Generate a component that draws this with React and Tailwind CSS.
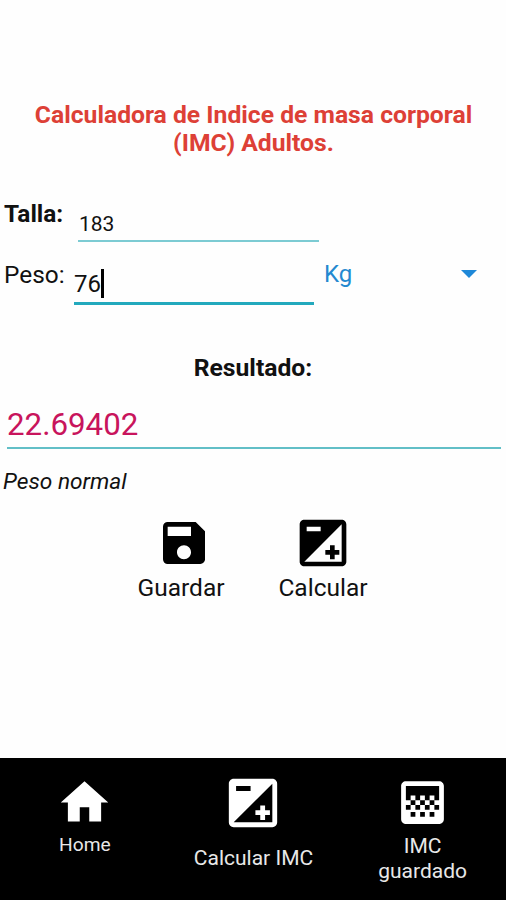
import React, { useState } from 'react';
import { MdHome, MdSave, MdGradient } from 'react-icons/md';

function ExposureIcon({ size, color }) {
  return (
    <svg width={size} height={size} viewBox="0 0 24 24" fill={color}>
      <path d="M15 17v2h2v-2h2v-2h-2v-2h-2v2h-2v2h2zm5-15H4c-1.1 0-2 .9-2 2v16c0 1.1.9 2 2 2h16c1.1 0 2-.9 2-2V4c0-1.1-.9-2-2-2zM5 5h6v2H5V5zm15 15H4L20 4v16z" />
    </svg>
  );
}

function ActionButton({ icon, label, className, iconClass, onClick }) {
  return (
    <button type="button" className={className} onClick={onClick}>
      <span className={iconClass}>{icon}</span>
      <span className="text-[24.5px] leading-[34px]">{label}</span>
    </button>
  );
}

function NavItem({ icon, label, className, labelClass }) {
  return (
    <a href="#" className={className}>
      {icon}
      <span className={labelClass}>{label}</span>
    </a>
  );
}

function App() {
  const [talla] = useState('183');
  const [peso] = useState('76');
  const [resultado, setResultado] = useState('22.69402');

  const calcular = () => {
    const metros = Number(talla) / 100;
    setResultado((Number(peso) / (metros * metros)).toFixed(5));
  };

  return (
    <div className="flex h-[900px] w-[506px] flex-col overflow-hidden bg-[#fefefe] font-['Roboto',sans-serif] text-[#111111]">
      <main className="flex h-[758px] flex-col pt-[101px]">
        <h1 className="pl-px text-center text-[24.7px] leading-[28px] font-bold text-[#dd4036]">
          Calculadora de Indice de masa corporal<br />(IMC) Adultos.
        </h1>

        <div className="mt-[41px] flex h-[45px] items-start pl-[4px]">
          <label className="w-[74px] pt-[2px] text-[24.4px] leading-[28px] font-bold">Talla:</label>
          <div className="flex h-[44px] w-[241px] items-end border-b-2 border-[#7ccbd3] pb-[4px] pl-px text-[21px] leading-[24px]">
            {talla}
          </div>
        </div>

        <div className="flex h-[62px] items-start pl-[4px]">
          <label className="w-[70px] pt-[18px] text-[24.4px] leading-[28px]">Peso:</label>
          <div className="flex h-[62px] w-[240px] items-end border-b-[3px] border-[#23a9bd] pb-[4px] text-[24px] leading-[28px]">
            {peso}
            <span className="h-[29px] w-[3px] bg-black"></span>
          </div>
          <div className="ml-[10px] flex w-[153px] items-center justify-between pt-[17px] text-[24px] leading-[28px] text-[#2489d0]">
            Kg
            <svg className="h-[8px] w-[16px]" viewBox="0 0 16 8" fill="#1e88d8">
              <path d="M0 0h16L8 8z" />
            </svg>
          </div>
        </div>

        <h2 className="mt-[49px] text-center text-[24.7px] leading-[28px] font-bold">Resultado:</h2>

        <div className="mr-[5px] ml-[7px] mt-[23px] flex h-[44px] items-start border-b-2 border-[#62bfc7] text-[31.3px] leading-[40px] text-[#c8145c]">
          {resultado}
        </div>
        <p className="mt-[19px] pl-[3px] text-[22.7px] leading-[28px] italic">Peso normal</p>

        <div className="mt-[19px] flex pl-[137px]">
          <ActionButton
            icon={<MdSave size={56} color="#000" />}
            label="Guardar"
            className="flex w-[88px] flex-col items-center"
            iconClass="pl-[6px]"
          />
          <ActionButton
            icon={<ExposureIcon size={56} color="#000" />}
            label="Calcular"
            className="ml-[53px] flex w-[90px] flex-col items-center"
            iconClass=""
            onClick={calcular}
          />
        </div>
      </main>

      <nav className="grid h-[142px] grid-cols-3 bg-black text-[#e8e8e8]">
        <NavItem
          icon={<MdHome size={57} color="#fff" />}
          label="Home"
          className="flex flex-col items-center pt-[16px] pl-px"
          labelClass="mt-px text-[19.2px] leading-[26px]"
        />
        <NavItem
          icon={<ExposureIcon size={58} color="#fff" />}
          label="Calcular IMC"
          className="flex flex-col items-center pt-[16px] pl-px"
          labelClass="mt-[13px] text-[21px] leading-[26px]"
        />
        <NavItem
          icon={<MdGradient size={57} color="#fff" />}
          label={<>IMC<br />guardado</>}
          className="flex flex-col items-center pt-[16px] pl-[2px]"
          labelClass="mt-[3px] text-center text-[21px] leading-[25px]"
        />
      </nav>
    </div>
  );
}

export default App;
